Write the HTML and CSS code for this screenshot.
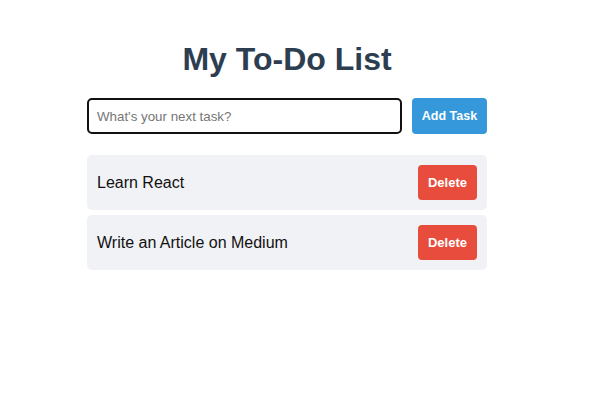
FILE: index.html
```html
<!DOCTYPE html>
<html lang="en">
<head>
<meta charset="utf-8">
<title>My To-Do List</title>
<link rel="stylesheet" href="styles.css">
</head>
<body>
<div class="app">
  <h1 class="title">My To-Do List</h1>
  <form class="add-form">
    <input class="task-input" type="text" placeholder="What's your next task?">
    <button class="add-btn" type="button">Add Task</button>
  </form>
  <ul class="task-list">
    <li class="task-item"><span class="task-text">Learn React</span><button class="delete-btn" type="button">Delete</button></li>
    <li class="task-item"><span class="task-text">Write an Article on Medium</span><button class="delete-btn" type="button">Delete</button></li>
  </ul>
</div>
</body>
</html>
```

FILE: styles.css
```css
html, body {
  margin: 0;
  padding: 0;
  background: #ffffff;
  font-family: "Liberation Sans", Arial, sans-serif;
}
.app {
  width: 400px;
  margin-left: 87px;
  padding-top: 41px;
}
.title {
  margin: 0 0 20px;
  font-size: 32px;
  font-weight: bold;
  color: #2c3e50;
  text-align: center;
  line-height: 37px;
}
.add-form {
  display: flex;
  gap: 10px;
  margin: 0;
}
.task-input {
  flex: 1;
  min-width: 0;
  height: 36px;
  box-sizing: border-box;
  border: 2px solid #111111;
  border-radius: 5px;
  padding: 0 8px;
  font-family: "Liberation Sans", Arial, sans-serif;
  font-size: 13.33px;
  color: #222;
  outline: none;
}
.task-input::placeholder {
  color: #767676;
}
.add-btn {
  flex: 0 0 75px;
  width: 75px;
  box-sizing: border-box;
  height: 36px;
  padding: 0;
  border: none;
  border-radius: 4px;
  background: #3498db;
  color: #ffffff;
  font-family: "Liberation Sans", Arial, sans-serif;
  font-size: 12.5px;
  font-weight: bold;
  text-align: center;
}
.task-list {
  list-style: none;
  margin: 21px 0 0;
  padding: 0;
  display: flex;
  flex-direction: column;
  gap: 5px;
}
.task-item {
  display: flex;
  align-items: center;
  justify-content: space-between;
  padding: 10px;
  background: #f1f2f6;
  border-radius: 5px;
}
.task-text {
  font-size: 16px;
  color: #111111;
}
.delete-btn {
  height: 35px;
  padding: 0 10px;
  border: none;
  border-radius: 4px;
  background: #e74c3c;
  color: #ffffff;
  font-family: "Liberation Sans", Arial, sans-serif;
  font-size: 13px;
  font-weight: bold;
}
```
